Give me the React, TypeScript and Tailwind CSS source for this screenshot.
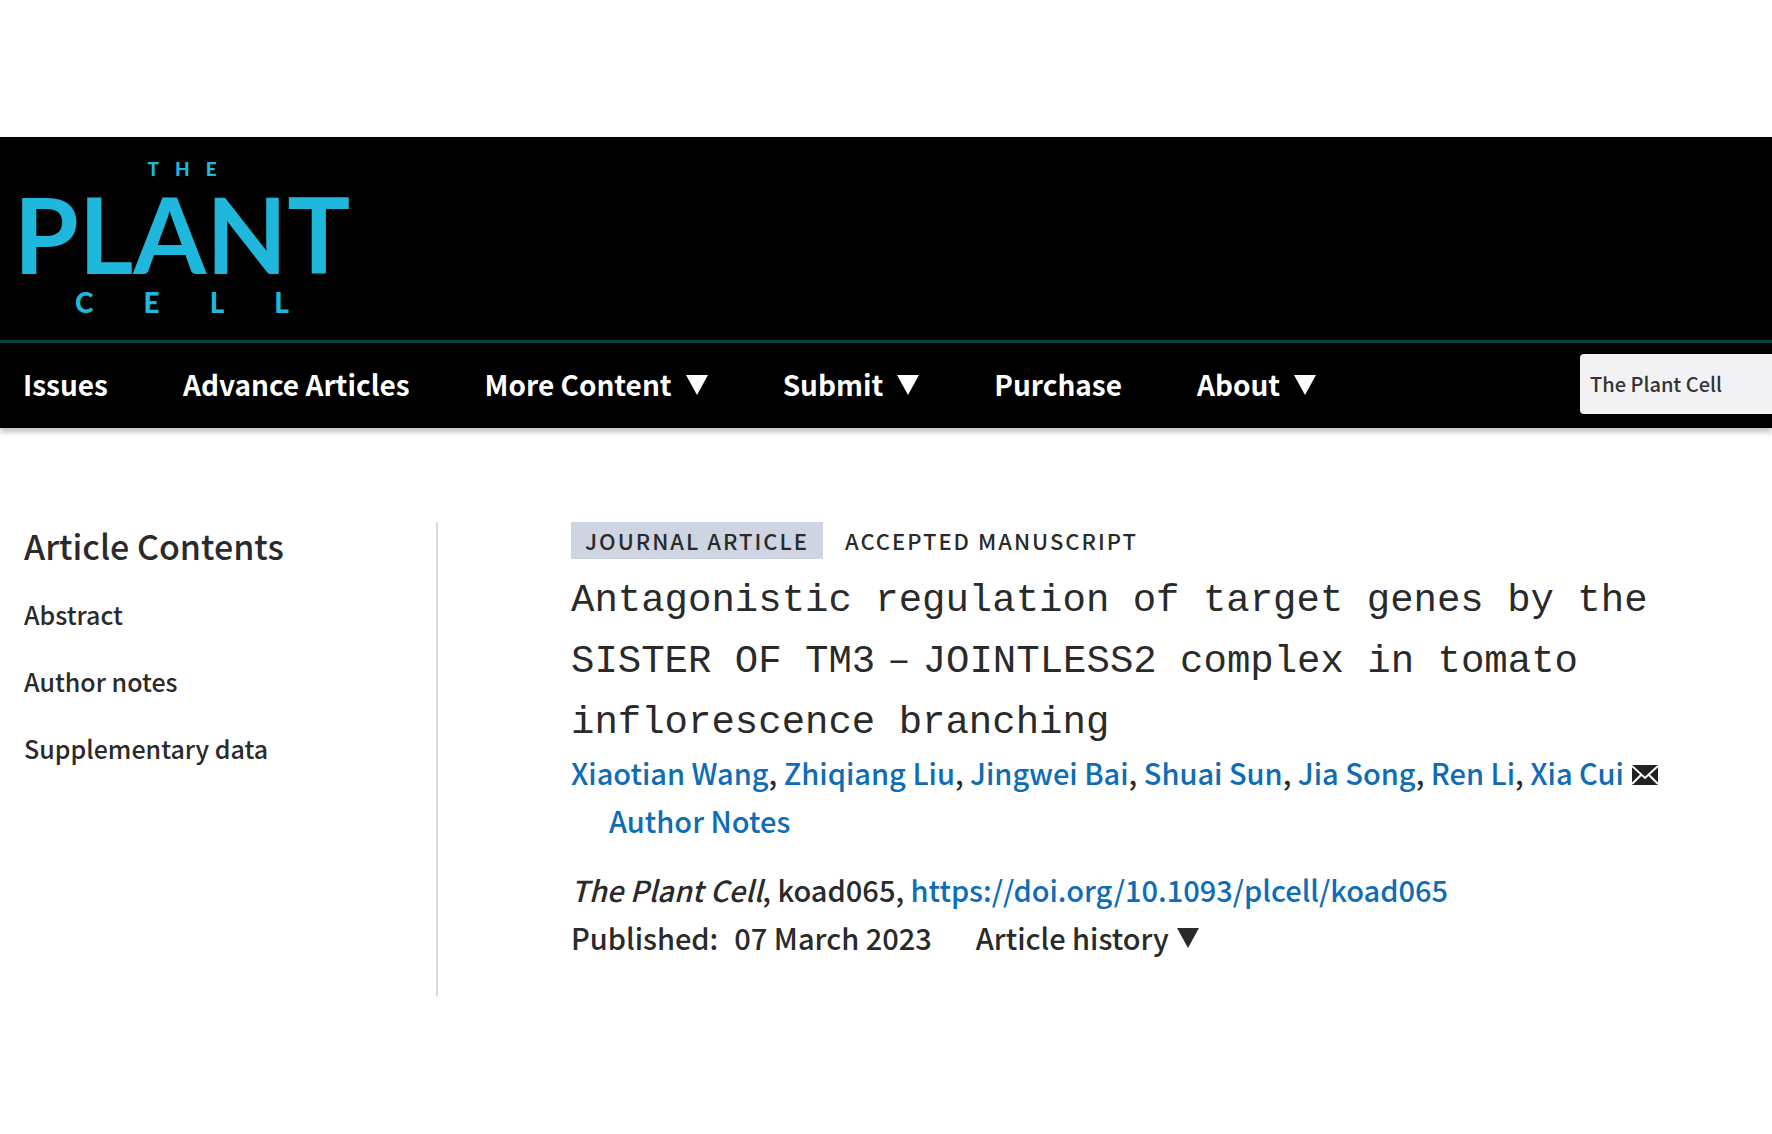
const NAV = [
  { label: "Issues" },
  { label: "Advance Articles" },
  { label: "More Content", menu: true },
  { label: "Submit", menu: true },
  { label: "Purchase" },
  { label: "About", menu: true },
];
const SECTIONS = ["Abstract", "Author notes", "Supplementary data"];
const AUTHORS = ["Xiaotian Wang", "Zhiqiang Liu", "Jingwei Bai", "Shuai Sun", "Jia Song", "Ren Li", "Xia Cui"];

function Caret() {
  return (
    <svg viewBox="0 0 22 22" className="size-[22px] shrink-0" fill="currentColor" aria-hidden="true">
      <path d="M0 2h22L11 22z" />
    </svg>
  );
}

function Mail() {
  return (
    <svg viewBox="0 0 26 20" className="inline-block w-[26px] h-5 ml-2 align-baseline" aria-hidden="true">
      <path d="M0 0h26v20H0z" fill="#222" />
      <path d="M0 1l13 12L26 1M0 19l9-9M26 19l-9-9" fill="none" stroke="#fff" strokeWidth="2" />
    </svg>
  );
}

function Logo() {
  return (
    <a href="#" className="flex flex-col items-center w-[324px] ml-5 font-['Lato'] font-black text-[#1fb8dc]">
      <span className="text-[19px] leading-[24px] tracking-[16px] pl-4">THE</span>
      <span className="text-[105px] leading-[104px] font-bold">PLANT</span>
      <span className="text-[28px] leading-[34px] tracking-[50px] pl-[50px]">CELL</span>
    </a>
  );
}

export default function App() {
  const link = "text-[#0f6cb6] hover:underline";
  return (
    <div className="bg-white text-[#2a2a2a] font-['Noto_Sans_CJK_SC',sans-serif] font-medium pt-[137px] overflow-x-hidden">
      <header className="bg-black text-white shadow-[0_4px_6px_rgba(0,0,0,0.25)]">
        <div className="h-[203px] pt-5"><Logo /></div>
        <div className="flex items-center h-[88px] pb-[3px] border-t-3 border-[#064440]">
          <nav className="flex items-center gap-[75px] pl-[23px] text-[28px] leading-[40px] font-bold whitespace-nowrap">
            {NAV.map((n) => (
              <a key={n.label} href="#" className="flex items-center gap-[14px]">
                {n.label}{n.menu && <Caret />}
              </a>
            ))}
          </nav>
          <select aria-label="Search scope" className="appearance-none ml-auto w-48 h-[60px] pl-[10px] rounded-l-sm bg-[#f2f2f4] text-[#333] text-[20px]">
            <option>The Plant Cell</option>
          </select>
        </div>
      </header>
      <main className="flex mt-[94px]">
        <aside className="w-[438px] h-[474px] shrink-0 pl-6 border-r-2 border-[#d9d9d9]">
          <h2 className="text-[34px] leading-[48px]">Article Contents</h2>
          <ul className="mt-[11px] text-[25px] leading-[67px]">
            {SECTIONS.map((s) => <li key={s}><a href="#" className="hover:underline">{s}</a></li>)}
          </ul>
        </aside>
        <article className="flex-1 min-w-0 pl-[133px] pr-[90px]">
          <div className="flex items-center text-[22px] leading-[37px] tracking-[2px] uppercase">
            <span className="bg-[#ced4e2] px-[14px]">Journal Article</span>
            <span className="ml-[22px]">Accepted Manuscript</span>
          </div>
          <h1 className="mt-3 font-['Liberation_Mono',monospace] font-normal text-[39px] leading-[61px]">
            Antagonistic regulation of target genes by the SISTER OF TM3<span className="px-3">–</span>JOINTLESS2 complex in tomato inflorescence branching
          </h1>
          <div className="-mt-[6px] text-[29px] leading-[48px] whitespace-nowrap">
            <p>
              {AUTHORS.map((a, i) => (
                <span key={a}>{i > 0 && ", "}<a href="#" className={link}>{a}</a></span>
              ))}
              <Mail />
            </p>
            <p className="pl-[38px]"><a href="#" className={link}>Author Notes</a></p>
            <p className="mt-[21px]">
              <em>The Plant Cell</em>, koad065, <a href="https://doi.org/10.1093/plcell/koad065" className={link}>https://doi.org/10.1093/plcell/koad065</a>
            </p>
            <div className="flex items-center">
              <span>Published:</span>
              <span className="ml-4">07 March 2023</span>
              <button className="flex items-center gap-2 ml-11">Article history <Caret /></button>
            </div>
          </div>
        </article>
      </main>
    </div>
  );
}
